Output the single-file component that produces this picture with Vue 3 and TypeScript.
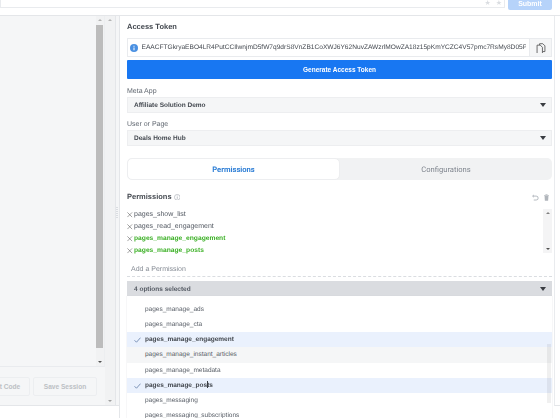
<script setup lang="ts">
const granted = [
  { name: "pages_show_list", added: false },
  { name: "pages_read_engagement", added: false },
  { name: "pages_manage_engagement", added: true },
  { name: "pages_manage_posts", added: true },
];

const options = [
  { name: "pages_manage_ads", checked: false, hover: false },
  { name: "pages_manage_cta", checked: false, hover: false },
  { name: "pages_manage_engagement", checked: true, hover: false },
  { name: "pages_manage_instant_articles", checked: false, hover: true },
  { name: "pages_manage_metadata", checked: false, hover: false },
  { name: "pages_manage_posts", checked: true, hover: false },
  { name: "pages_messaging", checked: false, hover: false },
  { name: "pages_messaging_subscriptions", checked: false, hover: false },
];

const token =
  "EAACFTGkryaEBO4LR4PutCCIlwnjmD5fW7q9drS8VnZB1CoXWJ6Y62NuvZAWzrlMOwZA18z15pKmYCZC4V57pmc7RsMy8D05P8r";
</script>

<template>
  <div class="page">
    <header class="topbar">
      <div class="query">
        <span class="star">★</span>
        <span class="star">★</span>
      </div>
      <button class="submit">Submit</button>
    </header>

    <div class="main">
      <aside class="left">
        <div class="left-top">
          <div class="code-area"></div>
          <div class="bar inner-bar">
            <span class="arrow up"></span>
            <div class="thumb"></div>
            <span class="arrow down dark"></span>
          </div>
        </div>
        <div class="left-actions">
          <button class="ghost code">Get Code</button>
          <button class="ghost">Save Session</button>
        </div>
        <div class="bar outer-bar">
          <span class="arrow up"></span>
          <span class="arrow down"></span>
        </div>
      </aside>

      <div class="gutter"><span class="grip"></span></div>

      <section class="panel">
        <h2 class="title">Access Token</h2>
        <div class="token">
          <svg class="info" viewBox="0 0 16 16">
            <circle cx="8" cy="8" r="8" fill="#4a90e2" />
            <rect x="7" y="7" width="2" height="5.5" fill="#fff" />
            <rect x="7" y="3.5" width="2" height="2" fill="#fff" />
          </svg>
          <span class="token-text">{{ token }}</span>
          <span class="copy">
            <svg viewBox="0 0 14 14" width="10" height="10" fill="none" stroke="#555" stroke-width="1.200">
              <path d="M5 3V1h4.500l3 3v8H9" />
              <path d="M1.500 3h4.500l3 3v9H1.500z" fill="#f5f6f7" />
            </svg>
          </span>
        </div>
        <button class="generate">Generate Access Token</button>

        <label class="field-label">Meta App</label>
        <div class="select"><span>Affiliate Solution Demo</span><i class="caret"></i></div>
        <label class="field-label next">User or Page</label>
        <div class="select"><span>Deals Home Hub</span><i class="caret"></i></div>

        <div class="tabs">
          <div class="tab active">Permissions</div>
          <div class="tab">Configurations</div>
        </div>

        <div class="perm-head">
          <h2 class="title">Permissions</h2>
          <svg class="help" viewBox="0 0 10 10">
            <circle cx="5" cy="5" r="4.300" fill="none" stroke="#b8bcc2" stroke-width="1.200" />
            <rect x="4.300" y="4" width="1.400" height="3.400" fill="#b8bcc2" />
            <rect x="4.300" y="2.400" width="1.400" height="1" fill="#b8bcc2" />
          </svg>
          <span class="spacer"></span>
          <svg class="tool" viewBox="0 0 10 10" fill="none" stroke="#8d949e" stroke-width="0.900">
            <path d="M2.500 1.500L1 3l1.500 1.500M1 3h5a2.800 2.800 0 0 1 0 5.600H2.500" />
          </svg>
          <svg class="tool" viewBox="0 0 10 10" fill="#b0b5bb">
            <rect x="1.500" y="1.500" width="7" height="1" />
            <rect x="3.500" y="0.500" width="3" height="1" />
            <path d="M2.200 3h5.600l-.5 6.500H2.700z" />
          </svg>
        </div>

        <div class="perm-box">
          <ul class="perm-list">
            <li v-for="p in granted" :key="p.name" :class="{ added: p.added }">
              <svg class="x" viewBox="0 0 7 7" stroke="#555" stroke-width="0.700">
                <path d="M.5.5l6 6M6.500.5l-6 6" />
              </svg>
              {{ p.name }}
            </li>
          </ul>
          <div class="bar list-bar">
            <span class="arrow up dark"></span>
            <span class="arrow down dark"></span>
          </div>
        </div>

        <div class="add">Add a Permission</div>

        <div class="select open"><span>4 options selected</span><i class="caret"></i></div>
        <ul class="menu">
          <li
            v-for="o in options"
            :key="o.name"
            :class="{ checked: o.checked, hover: o.hover }"
          >
            <svg v-if="o.checked" class="check" viewBox="0 0 8 7" fill="none" stroke="#4b6a99" stroke-width="0.800">
              <path d="M.5 3.800l2.300 2.300L7.500.8" />
            </svg>
            {{ o.name }}
          </li>
          <div class="menu-thumb"></div>
          <div class="text-cursor"></div>
        </ul>
      </section>

      <div class="page-edge"></div>
    </div>
  </div>
</template>

<style>
html,
body {
  margin: 0;
  overflow: hidden;
  background: #fff;
}
</style>

<style scoped>
.page {
  width: 560px;
  height: 418px;
  overflow: hidden;
  font-family: "Liberation Sans", Arial, sans-serif;
  color: #4b4f56;
  text-rendering: geometricPrecision;
  filter: blur(0.3px);
}

.topbar {
  display: flex;
  gap: 3px;
  height: 15px;
  border-bottom: 1px solid #e4e6e9;
}
.query {
  flex: 1;
  height: 8px;
  box-sizing: border-box;
  border: 1px solid #e9ebee;
  border-top: 0;
  overflow: hidden;
  display: flex;
  justify-content: flex-end;
  align-items: flex-end;
  gap: 5px;
  padding-right: 2px;
}
.star {
  font-size: 7px;
  line-height: 6px;
  color: #dadde1;
}
.submit {
  box-sizing: border-box;
  width: 44px;
  height: 8px;
  margin-right: 8px;
  border: 0;
  padding: 0 0 10px;
  background: #b6d3fa;
  color: #fff;
  font: bold 7px/7px "Liberation Sans", sans-serif;
  overflow: hidden;
  border-radius: 0 0 2px 2px;
}

.main {
  display: flex;
  align-items: flex-start;
  height: 402px;
}

.left {
  position: relative;
  box-sizing: border-box;
  width: 116px;
  height: 390px;
  flex: none;
  display: flex;
  flex-direction: column;
  background: #f5f6f7;
  border-right: 1px solid #e4e6e9;
  border-bottom: 1px solid #e4e6e9;
}
.left-top {
  flex: none;
  height: 351px;
  display: flex;
  width: 105px;
  border-bottom: 1px solid #e9ebee;
  border-right: 1px solid #eceef0;
  box-sizing: border-box;
}
.code-area {
  flex: 1;
}
.bar {
  position: relative;
  display: block;
}
.inner-bar {
  width: 8px;
  background: #f1f2f3;
}
.thumb {
  position: absolute;
  top: 9px;
  left: 0;
  width: 7px;
  height: 323px;
  background: #bcbcbc;
}
.outer-bar {
  position: absolute;
  top: 0;
  right: 0;
  bottom: 0;
  width: 10px;
  background: #f1f2f3;
}
.arrow {
  position: absolute;
  left: 50%;
  margin-left: -2px;
  border-left: 2px solid transparent;
  border-right: 2px solid transparent;
}
.arrow.up {
  top: 3px;
  border-bottom: 2.500px solid #b4b4b4;
}
.arrow.down {
  bottom: 3px;
  border-top: 2.500px solid #a0a0a0;
}
.arrow.up.dark {
  border-bottom-color: #808080;
}
.arrow.down.dark {
  border-top-color: #505050;
}

.left-actions {
  display: flex;
  justify-content: flex-end;
  gap: 3px;
  width: 97px;
  padding-top: 10px;
  overflow: hidden;
}
.ghost {
  height: 19px;
  width: 64px;
  flex: none;
  padding: 0;
  border: 1px solid #eceef0;
  border-radius: 2px;
  background: #f5f6f7;
  color: #bcc0c4;
  font: bold 6.600px "Liberation Sans", sans-serif;
}
.ghost.code {
  width: 49px;
}

.gutter {
  position: relative;
  box-sizing: border-box;
  width: 3px;
  height: 390px;
  flex: none;
  background: #f5f6f7;
  border-bottom: 1px solid #e4e6e9;
}
.grip {
  position: absolute;
  top: 191px;
  left: 0;
  width: 2px;
  height: 11px;
  background: repeating-linear-gradient(#dadde1 0 1px, transparent 1px 2px);
}
.page-edge {
  width: 6px;
  height: 390px;
  flex: none;
  box-sizing: border-box;
  border-left: 1px solid #e9ebee;
  border-bottom: 1px solid #e4e6e9;
}

.panel {
  flex: 1;
  min-width: 0;
  height: 402px;
  box-sizing: border-box;
  padding: 5px 2px 0 7px;
  border-left: 1px solid #e4e6e9;
  overflow: hidden;
}

.title {
  margin: 0;
  font-size: 7.500px;
  line-height: 12px;
  font-weight: bold;
  color: #444950;
}

.token {
  display: flex;
  align-items: center;
  height: 19px;
  margin-top: 5px;
  background: #fff;
  border: 1px solid #e9ebee;
  box-sizing: border-box;
  padding-left: 2px;
}
.info {
  width: 8px;
  height: 8px;
  flex: none;
  margin-right: 3.500px;
}
.token-text {
  flex: 1;
  min-width: 0;
  overflow: hidden;
  white-space: nowrap;
  margin-right: 3px;
  font-size: 6.600px;
  color: #444950;
}
.copy {
  width: 21px;
  height: 100%;
  flex: none;
  display: flex;
  align-items: center;
  justify-content: center;
  background: #f5f6f7;
  border-left: 1px solid #e9ebee;
}

.generate {
  display: block;
  width: 100%;
  height: 19px;
  margin-top: 3px;
  padding: 0;
  border: 0;
  border-radius: 1px;
  background: #1877f2;
  color: #fff;
  font: bold 6.500px "Liberation Sans", sans-serif;
}

.field-label {
  display: block;
  margin-top: 7.500px;
  font-size: 7px;
  line-height: 10px;
  color: #606770;
}
.field-label.next {
  margin-top: 6.500px;
}
.select {
  display: flex;
  align-items: center;
  justify-content: space-between;
  height: 16px;
  margin-top: 0.500px;
  padding: 0 5.500px 0 6px;
  box-sizing: border-box;
  background: #f5f6f7;
  border: 1px solid #edeef0;
  font-size: 6.500px;
  font-weight: bold;
  color: #444950;
}
.caret {
  border-left: 3.500px solid transparent;
  border-right: 3.500px solid transparent;
  border-top: 4px solid #3a3d42;
}

.tabs {
  display: flex;
  height: 22px;
  margin-top: 12px;
  background: #f1f2f3;
  border-radius: 5px;
  font-family: Roboto, sans-serif;
  font-size: 7.600px;
}
.tab {
  flex: 1;
  display: flex;
  align-items: center;
  justify-content: center;
  color: #7f858e;
}
.tab.active {
  flex: none;
  width: 213px;
  background: #fff;
  border: 1px solid #edeef0;
  box-sizing: border-box;
  border-radius: 5px;
  color: #2f7fd6;
  font-weight: 700;
}

.perm-head {
  display: flex;
  align-items: center;
  gap: 2px;
  margin-top: 11px;
}
.help {
  width: 6.500px;
  height: 6.500px;
}
.spacer {
  flex: 1;
}
.tool {
  width: 7px;
  height: 7px;
  margin-right: 2px;
}

.perm-box {
  display: flex;
  justify-content: space-between;
  height: 45px;
  margin-top: 5px;
}
.perm-list {
  margin: 0.800px 0 0;
  padding: 0;
  list-style: none;
  font-size: 7px;
  line-height: 12px;
  color: #555b64;
}
.perm-list li {
  display: flex;
  align-items: center;
  gap: 1.500px;
  white-space: nowrap;
}
.perm-list li.added {
  color: #3bb025;
  font-size: 6.700px;
  font-weight: bold;
}
.x {
  width: 5.500px;
  height: 5.500px;
  flex: none;
}
.list-bar {
  width: 9px;
  margin-top: 1px;
  background: #f4f4f5;
}

.add {
  height: 22px;
  margin-top: 2px;
  padding: 10px 0 0 4px;
  box-sizing: border-box;
  border-bottom: 1px dashed #dadde1;
  font-size: 7px;
  line-height: 10px;
  color: #858b94;
}

.select.open {
  height: 15px;
  margin-top: 4px;
  padding: 1px 6.500px 0 7px;
  background: #dadce0;
  border: 0;
  color: #555b64;
}
.menu {
  position: relative;
  margin: 0;
  padding: 5.500px 0 0;
  list-style: none;
  background: #fff;
  box-shadow: 0 0 1px #ccd0d5;
  height: 130px;
  overflow: hidden;
  font-size: 6.500px;
  color: #555b64;
}
.menu li {
  display: block;
  position: relative;
  height: 15.250px;
  line-height: 15.250px;
  padding-left: 18px;
  white-space: nowrap;
}
.menu li.hover {
  background: #f5f6f7;
}
.menu li.checked {
  background: #eaf1fd;
  font-weight: bold;
  color: #444950;
}
.check {
  position: absolute;
  left: 7px;
  top: 5px;
  width: 7px;
  height: 6px;
}
.menu-thumb {
  position: absolute;
  top: 48px;
  right: 1px;
  width: 4px;
  height: 59px;
  background: rgba(0, 0, 0, 0.06);
}
.text-cursor {
  position: absolute;
  top: 85px;
  left: 79.500px;
  width: 1px;
  height: 7px;
  background: #3a3d42;
}
</style>
